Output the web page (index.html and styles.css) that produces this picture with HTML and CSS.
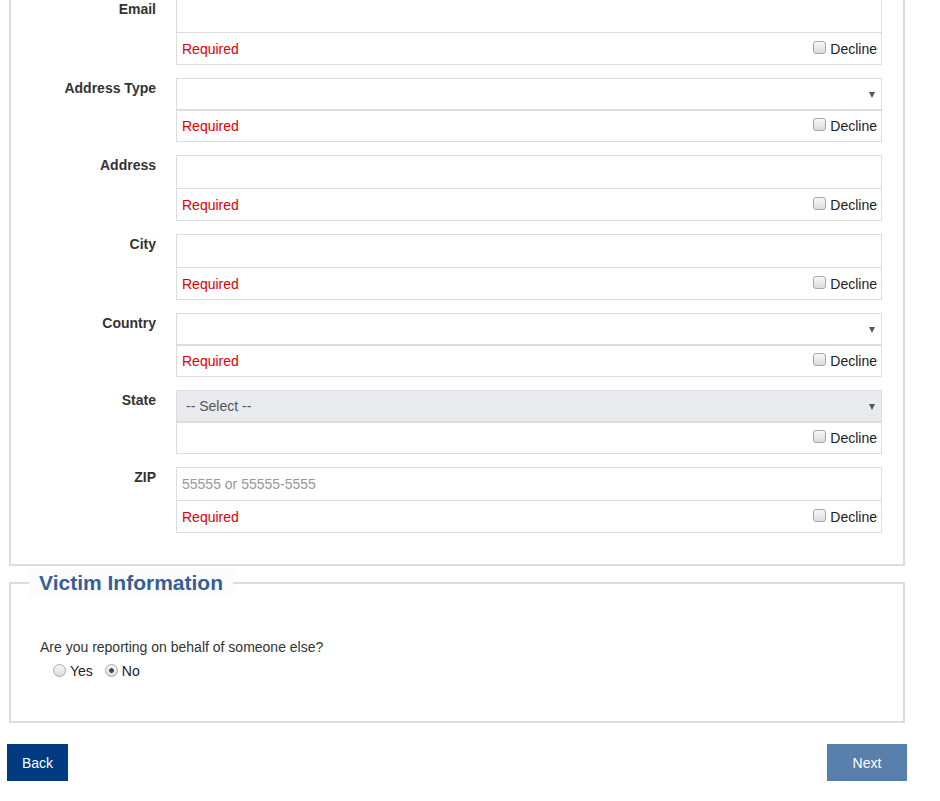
FILE: index.html
```html
<!DOCTYPE html>
<html lang="en">
<head>
<meta charset="utf-8">
<title>Report</title>
<link rel="stylesheet" href="styles.css">
</head>
<body>
<div class="page">
  <fieldset class="panel panel-contact">
    <div class="field">
      <label class="field-label">Email</label>
      <div class="field-body">
        <input class="text-input" type="text">
        <div class="status-row"><span class="required">Required</span><label class="decline"><input type="checkbox" class="check">Decline</label></div>
      </div>
    </div>
    <div class="field">
      <label class="field-label">Address Type</label>
      <div class="field-body">
        <div class="select-box"><span class="select-text"></span><span class="caret"></span></div>
        <div class="status-row boxed"><span class="required">Required</span><label class="decline"><input type="checkbox" class="check">Decline</label></div>
      </div>
    </div>
    <div class="field">
      <label class="field-label">Address</label>
      <div class="field-body">
        <input class="text-input" type="text">
        <div class="status-row"><span class="required">Required</span><label class="decline"><input type="checkbox" class="check">Decline</label></div>
      </div>
    </div>
    <div class="field">
      <label class="field-label">City</label>
      <div class="field-body">
        <input class="text-input" type="text">
        <div class="status-row"><span class="required">Required</span><label class="decline"><input type="checkbox" class="check">Decline</label></div>
      </div>
    </div>
    <div class="field">
      <label class="field-label">Country</label>
      <div class="field-body">
        <div class="select-box"><span class="select-text"></span><span class="caret"></span></div>
        <div class="status-row boxed"><span class="required">Required</span><label class="decline"><input type="checkbox" class="check">Decline</label></div>
      </div>
    </div>
    <div class="field">
      <label class="field-label">State</label>
      <div class="field-body">
        <div class="select-box disabled"><span class="select-text">-- Select --</span><span class="caret"></span></div>
        <div class="status-row boxed"><span class="required"></span><label class="decline"><input type="checkbox" class="check">Decline</label></div>
      </div>
    </div>
    <div class="field">
      <label class="field-label">ZIP</label>
      <div class="field-body">
        <input class="text-input" type="text" placeholder="55555 or 55555-5555">
        <div class="status-row"><span class="required">Required</span><label class="decline"><input type="checkbox" class="check">Decline</label></div>
      </div>
    </div>
  </fieldset>

  <fieldset class="panel panel-victim">
    <legend class="panel-title">Victim Information</legend>
    <p class="question">Are you reporting on behalf of someone else?</p>
    <div class="radio-row">
      <label class="radio-option"><input type="radio" name="behalf" class="radio">Yes</label>
      <label class="radio-option"><input type="radio" name="behalf" class="radio" checked>No</label>
    </div>
  </fieldset>

  <div class="actions">
    <button class="btn btn-back" type="button">Back</button>
    <button class="btn btn-next" type="button">Next</button>
  </div>
</div>
</body>
</html>
```
FILE: styles.css
```css
* { box-sizing: border-box; }

html, body {
  margin: 0;
  padding: 0;
  background: #fff;
  overflow: hidden;
}

body {
  font-family: "Liberation Sans", Arial, sans-serif;
  font-size: 14px;
  color: #333;
}

.page {
  width: 900px;
  margin-left: 7px;
}

.panel {
  margin: 0 2px;
  border: 2px solid #dddddd;
  min-width: 0;
}

.panel-contact {
  margin-top: -23px;
  padding: 20px 21px 18px 0;
}

.field {
  display: grid;
  grid-template-columns: 145px 706px;
  column-gap: 20px;
  margin-bottom: 13px;
}

.field-label {
  text-align: right;
  font-weight: bold;
  line-height: 17px;
  padding-top: 2px;
  color: #333;
}

.field-body {
  display: flex;
  flex-direction: column;
}

.text-input {
  display: block;
  width: 100%;
  height: 34px;
  margin: 0;
  border: 1px solid #dddddd;
  padding: 0 5px;
  font-family: inherit;
  font-size: 14px;
  color: #333;
  background: #fff;
  outline: none;
}

.text-input::placeholder {
  color: #999;
}

.select-box {
  position: relative;
  height: 32px;
  border: 1px solid #dddddd;
  background: #fff;
  display: flex;
  align-items: center;
  padding-left: 9px;
  color: #555;
}

.select-box.disabled {
  background: #e8eaed;
}

.caret {
  position: absolute;
  right: 6px;
  top: 13px;
  width: 0;
  height: 0;
  border-left: 3px solid transparent;
  border-right: 3px solid transparent;
  border-top: 6px solid #555;
}

.status-row {
  height: 32px;
  border: 1px solid #dddddd;
  border-top: none;
  display: flex;
  align-items: center;
  justify-content: space-between;
  padding: 0 4px 0 5px;
}

.status-row.boxed {
  height: 32px;
  border-top: 1px solid #dddddd;
}

.required {
  color: #e00000;
}

.decline {
  display: flex;
  align-items: center;
  color: #222;
}

.check {
  appearance: none;
  -webkit-appearance: none;
  width: 13px;
  height: 13px;
  margin: 0 4px 3px 0;
  border: 1px solid #a8a8a8;
  border-radius: 3px;
  background: linear-gradient(#f7f7f7, #dcdcdc);
}

.panel-victim {
  margin-top: 3px;
  padding: 40px 20px 40px 29px;
}

.panel-title {
  margin-left: -11px;
  padding: 0 10px;
  font-size: 21px;
  line-height: 28px;
  font-weight: bold;
  color: #375e97;
  background: #fcfcfc;
}

.question {
  margin: 0;
  line-height: 20px;
  color: #333;
}

.radio-row {
  display: flex;
  margin-top: 4px;
  margin-left: 13px;
  line-height: 20px;
  gap: 12px;
}

.radio-option {
  display: flex;
  align-items: center;
  color: #222;
}

.radio {
  appearance: none;
  -webkit-appearance: none;
  width: 13px;
  height: 13px;
  margin: 0 4px 1px 0;
  border: 1px solid #a8a8a8;
  border-radius: 50%;
  background: linear-gradient(#f7f7f7, #dcdcdc);
  position: relative;
}

.radio:checked {
  background: radial-gradient(circle, #444 0, #444 2px, transparent 2.6px), linear-gradient(#f7f7f7, #dcdcdc);
}

.actions {
  display: flex;
  justify-content: space-between;
  margin-top: 21px;
}

.btn {
  height: 37px;
  border: none;
  border-radius: 0;
  margin: 0;
  font-family: inherit;
  font-size: 14px;
  color: #fff;
  background: #003a80;
  padding: 0;
}

.btn-back {
  width: 61px;
}

.btn-next {
  width: 80px;
  opacity: 0.65;
}
```
